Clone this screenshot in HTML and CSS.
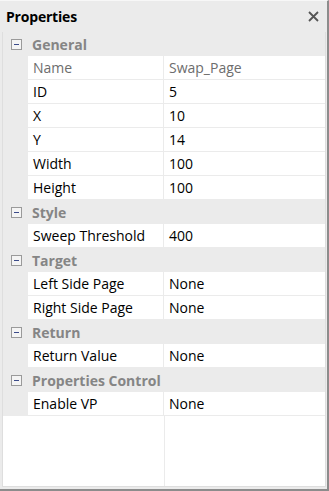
FILE: index.html
```html
<!DOCTYPE html>
<html lang="en">
<head>
<meta charset="UTF-8">
<title>Properties</title>
<link rel="stylesheet" href="styles.css">
</head>
<body>

<div class="panel">
    <div class="header">
        <span class="title">Properties</span>
        <svg class="close" width="11" height="11" viewBox="0 0 11 11">
            <path d="M1 1 L10 10 M10 1 L1 10" stroke="#555" stroke-width="1.8" fill="none"/>
        </svg>
    </div>

    <div class="grid">
        <div class="cat"><span class="toggle"></span><span class="cat-name">General</span></div>
        <div class="row readonly"><span class="gutter"></span><span class="name">Name</span><span class="value">Swap_Page</span></div>
        <div class="row"><span class="gutter"></span><span class="name">ID</span><span class="value">5</span></div>
        <div class="row"><span class="gutter"></span><span class="name">X</span><span class="value">10</span></div>
        <div class="row"><span class="gutter"></span><span class="name">Y</span><span class="value">14</span></div>
        <div class="row"><span class="gutter"></span><span class="name">Width</span><span class="value">100</span></div>
        <div class="row"><span class="gutter"></span><span class="name">Height</span><span class="value">100</span></div>

        <div class="cat"><span class="toggle"></span><span class="cat-name">Style</span></div>
        <div class="row"><span class="gutter"></span><span class="name">Sweep Threshold</span><span class="value">400</span></div>

        <div class="cat"><span class="toggle"></span><span class="cat-name">Target</span></div>
        <div class="row"><span class="gutter"></span><span class="name">Left Side Page</span><span class="value">None</span></div>
        <div class="row"><span class="gutter"></span><span class="name">Right Side Page</span><span class="value">None</span></div>

        <div class="cat"><span class="toggle"></span><span class="cat-name">Return</span></div>
        <div class="row"><span class="gutter"></span><span class="name">Return Value</span><span class="value">None</span></div>

        <div class="cat"><span class="toggle"></span><span class="cat-name">Properties Control</span></div>
        <div class="row"><span class="gutter"></span><span class="name">Enable VP</span><span class="value">None</span></div>

        <div class="filler"><span class="fill-name"></span><span class="fill-value"></span></div>
    </div>
</div>

</body>
</html>
```

FILE: styles.css
```css
body {
    margin: 0;
    padding: 0;
    font-family: "Open Sans", "Noto Sans", sans-serif;
    font-size: 14px;
    color: #000;
}

.panel {
    width: 329px;
    height: 491px;
    box-sizing: border-box;
    background: #ebebeb;
    border-top: 1px solid #f7f7f7;
    border-right: 2px solid #8c8c8c;
    border-bottom: 2px solid #8c8c8c;
    display: flex;
    flex-direction: column;
}

.header {
    height: 31px;
    display: flex;
    align-items: center;
    justify-content: space-between;
    padding: 0 6px;
}

.title {
    font-weight: bold;
    letter-spacing: -0.2px;
}

.close {
    margin-right: 2px;
}

.grid {
    flex: 1;
    margin: 0 1px 2px 2px;
    border-left: 1px solid #dedede;
    border-right: 1px solid #dedede;
    border-bottom: 1px solid #dedede;
    background: #fff;
    display: flex;
    flex-direction: column;
}

.cat,
.row {
    height: 24px;
    box-sizing: border-box;
    display: flex;
    align-items: center;
}

.cat {
    background: #ebebeb;
}

.toggle {
    width: 9px;
    height: 9px;
    border: 1px solid #9a9a9a;
    margin: 0 10px 0 8px;
    position: relative;
    background: #f4f4f4;
}

.toggle::after {
    content: "";
    position: absolute;
    left: 2px;
    top: 4px;
    width: 5px;
    height: 1px;
    background: #3b4b8a;
}

.cat-name {
    font-weight: bold;
    color: #858585;
}

.row {
    border-bottom: 1px solid #ebebeb;
}

.gutter {
    width: 25px;
    align-self: stretch;
    background: #ebebeb;
}

.name {
    width: 136px;
    padding-left: 5px;
    box-sizing: border-box;
    align-self: stretch;
    display: flex;
    align-items: center;
    border-right: 1px solid #ebebeb;
}

.value {
    padding-left: 5px;
}

.readonly .name,
.readonly .value {
    color: #6d6d6d;
}

.filler {
    flex: 1;
    display: flex;
}

.fill-name {
    width: 161px;
    border-right: 1px solid #ebebeb;
}
```
